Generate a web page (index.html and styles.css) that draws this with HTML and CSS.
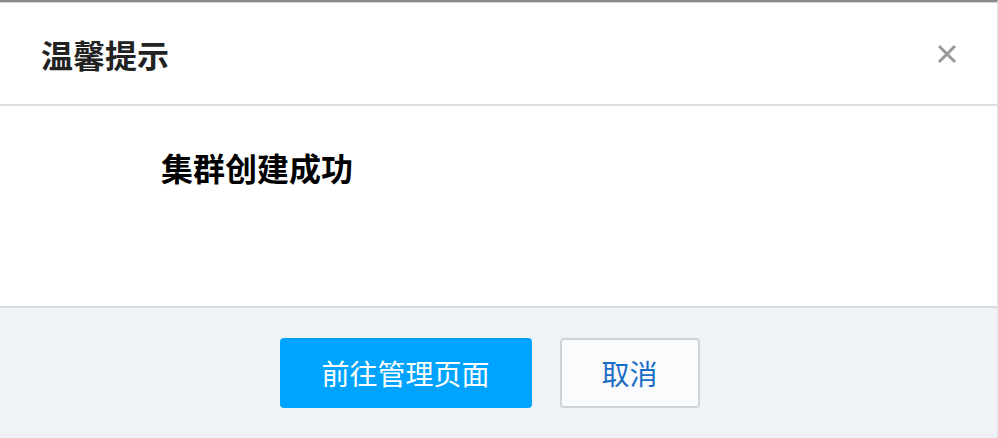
FILE: index.html
```html
<!DOCTYPE html>
<html lang="zh-CN">
<head>
    <meta charset="UTF-8">
    <meta name="viewport" content="width=device-width, initial-scale=1.0">
    <title>温馨提示</title>
    <link rel="stylesheet" href="styles.css">
</head>
<body>

    <div class="dialog">
        <div class="dialog-header">
            <h2 class="dialog-title">温馨提示</h2>
            <button class="dialog-close" type="button" aria-label="关闭">
                <svg width="20" height="20" viewBox="0 0 20 20">
                    <path d="M2 2 L18 18 M18 2 L2 18" stroke="#999" stroke-width="3" fill="none"/>
                </svg>
            </button>
        </div>

        <div class="dialog-body">
            <p class="message">集群创建成功</p>
        </div>

        <div class="dialog-footer">
            <button class="btn btn-primary" type="button">前往管理页面</button>
            <button class="btn btn-default" type="button">取消</button>
        </div>
    </div>

</body>
</html>
```

FILE: styles.css
```css
html, body {
    margin: 0;
    padding: 0;
    height: 100%;
}
body {
    font-family: 'Helvetica Neue', 'Liberation Sans', 'Noto Sans CJK SC', sans-serif;
    background-color: #fff;
    color: #222;
}
.dialog {
    height: 100%;
    display: flex;
    flex-direction: column;
    border-top: 2px solid #8a8a8a;
    border-right: 1px solid #e4e6e8;
    box-sizing: border-box;
}
.dialog-header {
    height: 104px;
    padding: 0 40px 0 41px;
    display: flex;
    align-items: center;
    justify-content: space-between;
    border-top: 1px solid #d6d6d6;
    border-bottom: 2px solid #dcdfe2;
    box-sizing: border-box;
}
.dialog-title {
    margin: 0;
    font-size: 32px;
    font-weight: bold;
    color: #222;
}
.dialog-close {
    background: none;
    border: none;
    padding: 0;
    width: 20px;
    height: 20px;
    cursor: pointer;
}
.dialog-close svg {
    display: block;
}
.dialog-body {
    height: 200px;
    padding: 0 0 0 161px;
    box-sizing: border-box;
}
.message {
    margin: 0;
    padding-top: 38px;
    font-size: 32px;
    font-weight: bold;
    color: #000;
}
.dialog-footer {
    flex: 1;
    display: flex;
    justify-content: center;
    align-items: flex-start;
    gap: 28px;
    padding: 30px 18px 0 0;
    background-color: #eff2f6;
    border-top: 2px solid #d8dadd;
}
.btn {
    height: 70px;
    font-family: inherit;
    font-size: 28px;
    border-radius: 4px;
    cursor: pointer;
    box-sizing: border-box;
}
.btn-primary {
    width: 252px;
    background-color: #00a4ff;
    color: #fff;
    border: none;
}
.btn-default {
    width: 140px;
    background-color: #fafbfc;
    color: #1a6dc6;
    border: 2px solid #d1d4d7;
}
```
